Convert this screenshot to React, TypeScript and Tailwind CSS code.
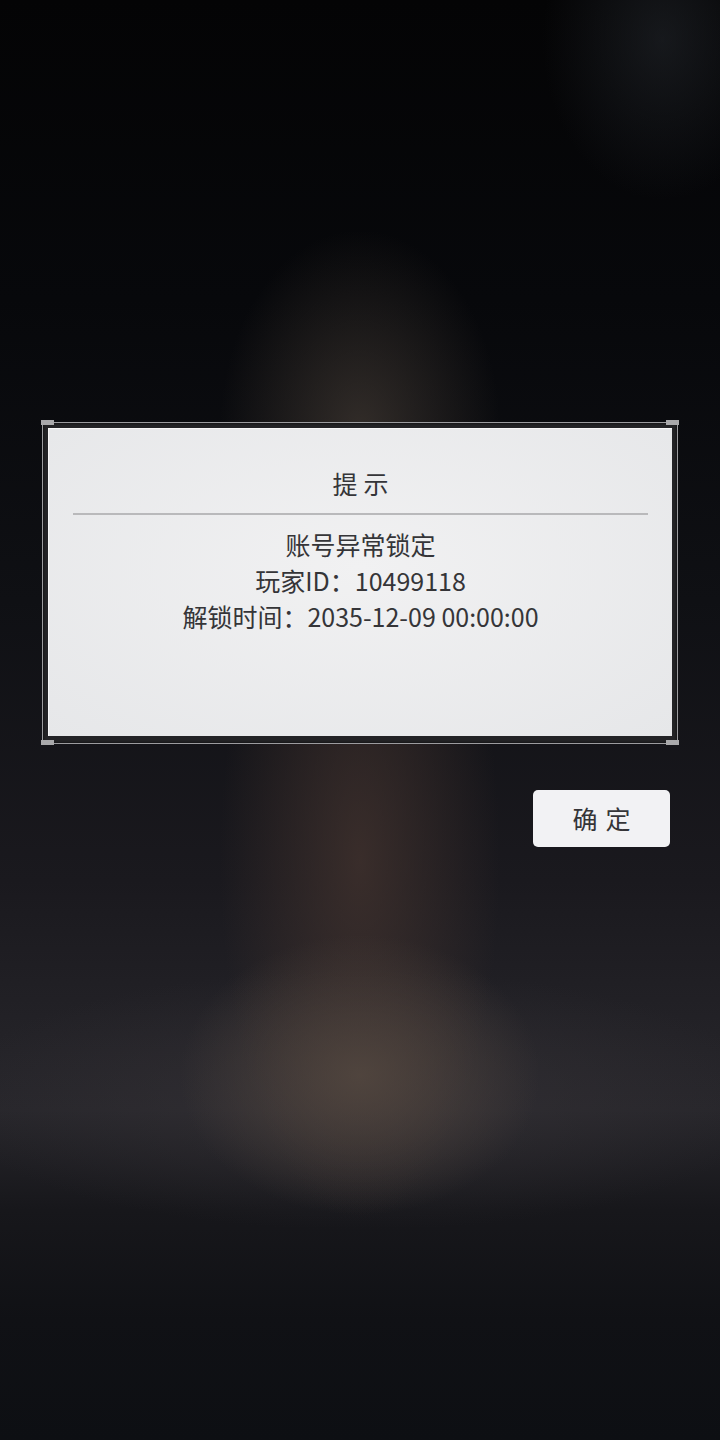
import React from 'react';

const FONT = "font-['Noto_Sans_CJK_SC','Noto_Sans',sans-serif]";

// little grey tabs sitting on the corners of the frame
const Corner = ({ pos }: { pos: string }) => (
  <div className={`absolute w-[13px] h-[5px] bg-[#a9a9ab] ${pos}`} />
);

const LockNotice = () => {
  return (
    <div className="relative w-[638px] h-[325px] p-[1px] pt-[2px]">
      <Corner pos="left-0 top-0" />
      <Corner pos="right-0 top-0" />
      <Corner pos="left-0 bottom-0" />
      <Corner pos="right-0 bottom-0" />

      {/* thin light outline + dark bevel */}
      <div className="h-full border border-[#9c9c9f] bg-[#232326] pt-[5px] pl-[5px] pr-[5px] pb-[7px] shadow-[inset_0_0_3px_rgba(0,0,0,0.8)]">
        <div className="h-full bg-[radial-gradient(ellipse_at_50%_45%,#f1f1f2,#e6e7e9)] border-l border-t border-[#f8f8f8] px-[24px] pt-[36px] text-[#353538] text-center">
          <div className="text-[25px] leading-[36px] tracking-[6px] pl-[6px]">提示</div>
          <div className="mt-[12px] h-[2px] bg-[#b9b9bb]" />
          <div className="mt-[11px] text-[25px] leading-[36px]">
            <p>账号异常锁定</p>
            <p>玩家ID：10499118</p>
            <p>解锁时间：2035-12-09 00:00:00</p>
          </div>
        </div>
      </div>
    </div>
  );
};

export default function App() {
  return (
    <div
      className={`min-h-[1440px] w-full ${FONT} bg-[radial-gradient(ellipse_180px_140px_at_50%_1075px,rgba(84,72,64,0.85),transparent),radial-gradient(ellipse_140px_360px_at_50%_860px,rgba(68,52,47,0.75),transparent),radial-gradient(ellipse_140px_200px_at_50%_430px,rgba(76,66,58,0.6),transparent),radial-gradient(ellipse_420px_130px_at_50%_1100px,rgba(58,54,58,0.55),transparent),radial-gradient(ellipse_120px_160px_at_92%_40px,rgba(40,44,50,0.5),transparent),linear-gradient(to_bottom,#040405_0px,#07080b_300px,#0f1014_600px,#1a191e_880px,#242328_1050px,#27262b_1110px,#17171b_1210px,#101115_1320px,#0d0f13_1440px)]`}
    >
      <div className="pt-[420px] px-[41px]">
        <LockNotice />
        <div className="flex justify-end pr-[9px] mt-[45px]">
          <button className="w-[137px] h-[57px] rounded-[5px] bg-[#f2f2f4] text-[#353538] text-[25px] tracking-[8px] pl-[8px]">
            确定
          </button>
        </div>
      </div>
    </div>
  );
}
